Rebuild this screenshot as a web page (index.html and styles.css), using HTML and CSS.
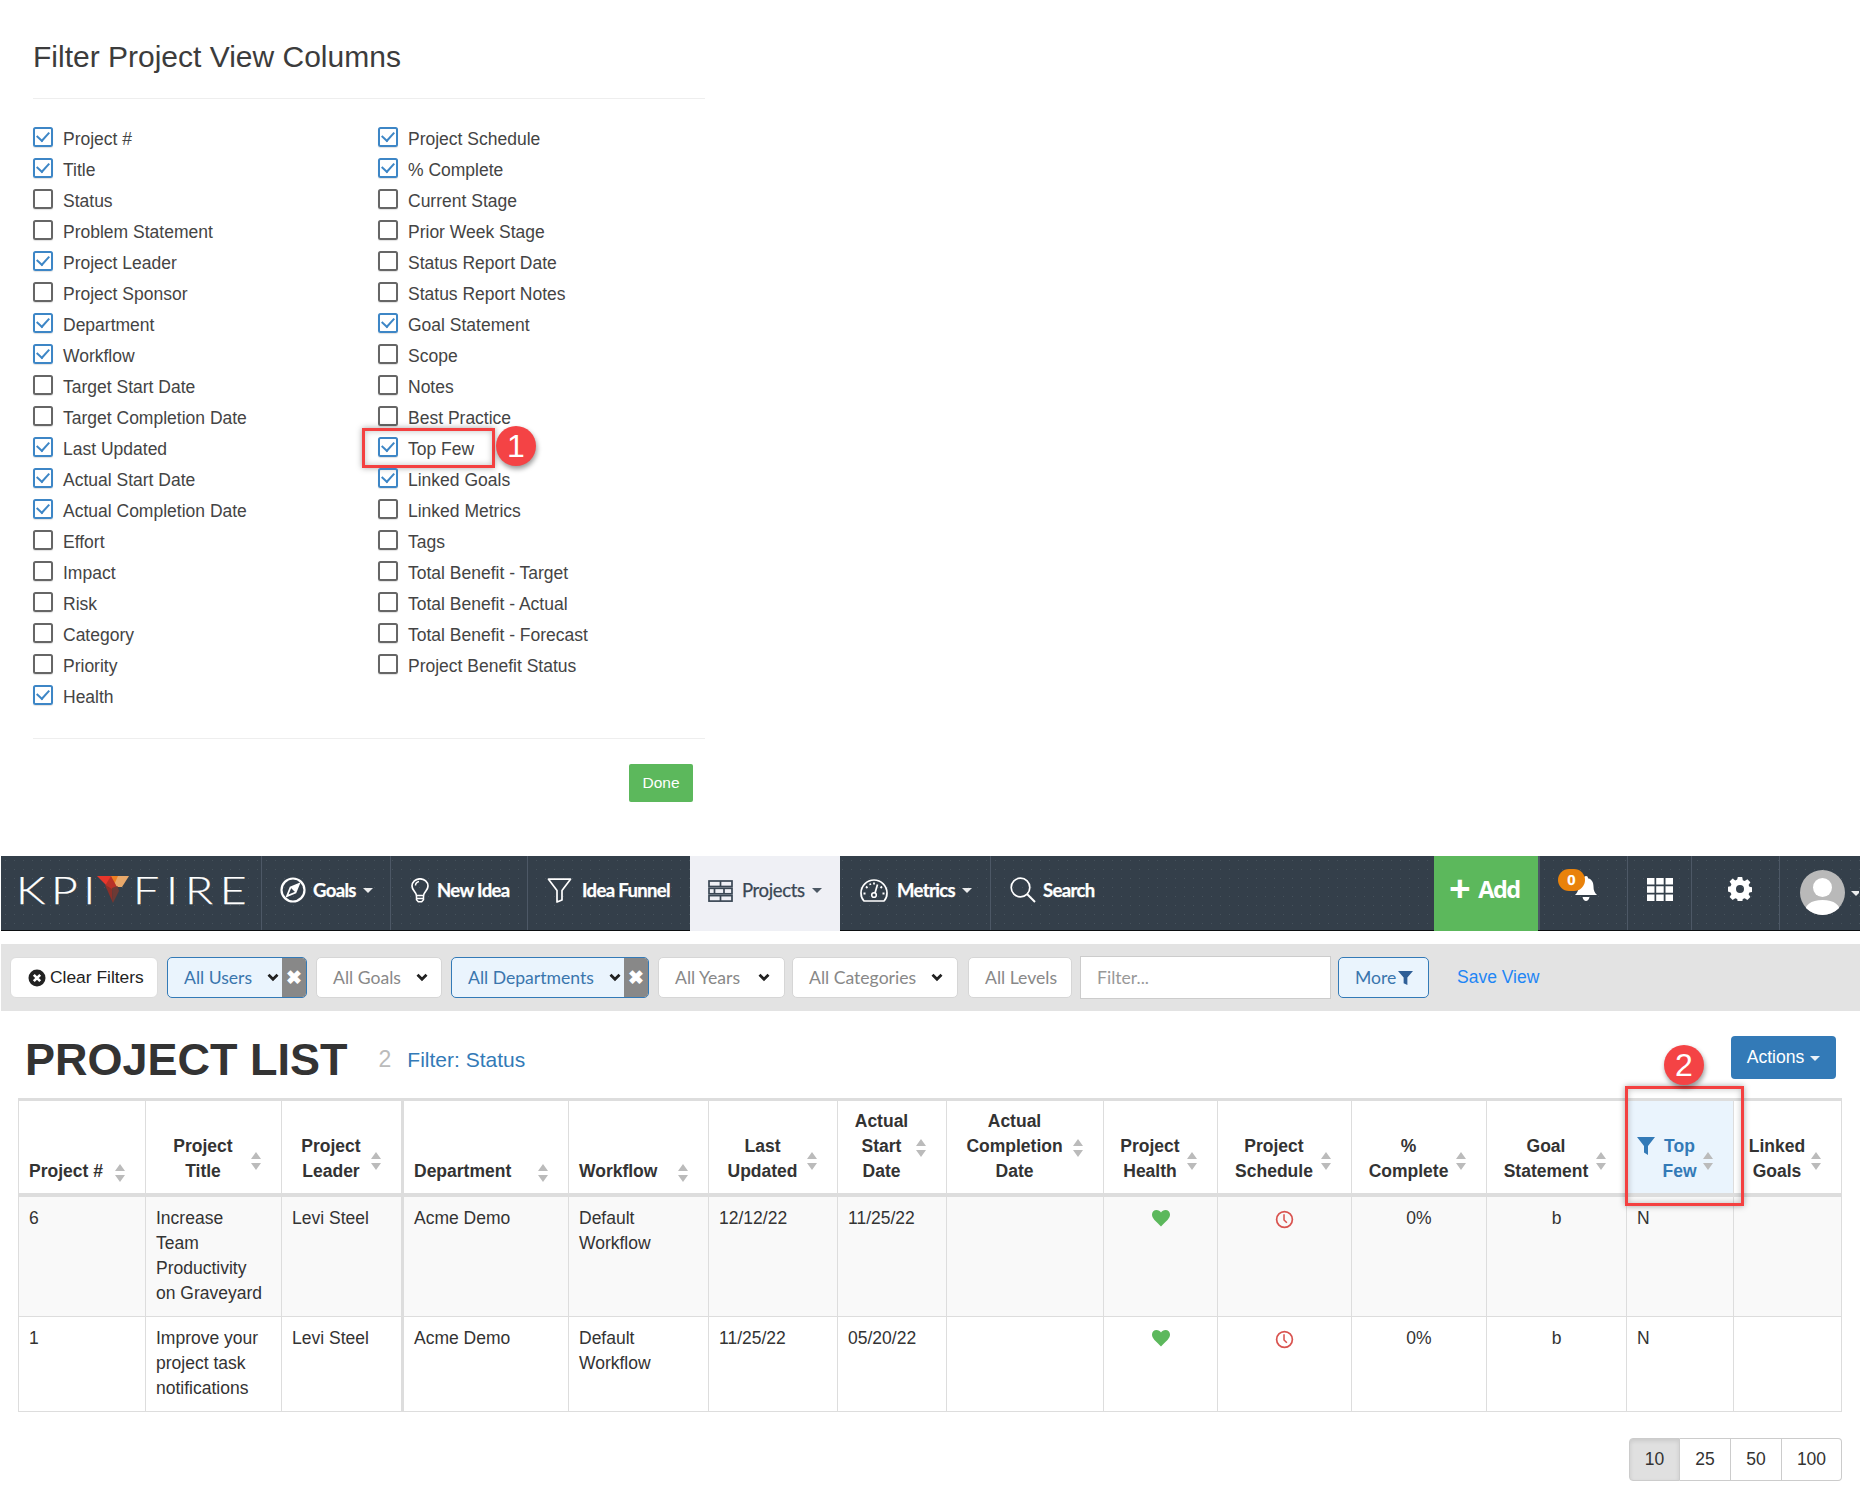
FILE: index.html
```html
<!DOCTYPE html>
<html lang="en">
<head>
<meta charset="utf-8">
<title>Project List</title>
<link rel="stylesheet" href="styles.css">
</head>
<body>
<svg class="defs" width="0" height="0" aria-hidden="true">
  <symbol id="chev" viewBox="0 0 12 9"><path d="M1.5 1.8 6 6.3l4.5-4.5" fill="none" stroke="currentColor" stroke-width="2.8"/></symbol>
  <symbol id="sort" viewBox="0 0 12 20"><path d="M6 1 11 8H1zM6 19 1 12h10z" fill="#bbb"/></symbol>
  <symbol id="heart" viewBox="0 0 22 20"><path d="M11 19.5C5 13.5 1 10.5 1 6.2 1 3 3.2 1 6 1c2.200 0 4 1.200 5 3 1-1.800 2.800-3 5-3 2.800 0 5 2 5 5.200 0 4.300-4 7.300-10 13.300z" fill="#5cb85c"/></symbol>
  <symbol id="clock" viewBox="0 0 20 20"><circle cx="10" cy="10" r="8.300" fill="none" stroke="#d9534f" stroke-width="1.800"/><path d="M9.500 4.500v6l3 3" fill="none" stroke="#d9534f" stroke-width="1.600"/></symbol>
</svg>

<section class="modal">
  <h2 class="modal-title">Filter Project View Columns</h2>
  <div class="columns">
    <ul class="col">
      <li><span class="box on"></span>Project #</li>
      <li><span class="box on"></span>Title</li>
      <li><span class="box"></span>Status</li>
      <li><span class="box"></span>Problem Statement</li>
      <li><span class="box on"></span>Project Leader</li>
      <li><span class="box"></span>Project Sponsor</li>
      <li><span class="box on"></span>Department</li>
      <li><span class="box on"></span>Workflow</li>
      <li><span class="box"></span>Target Start Date</li>
      <li><span class="box"></span>Target Completion Date</li>
      <li><span class="box on"></span>Last Updated</li>
      <li><span class="box on"></span>Actual Start Date</li>
      <li><span class="box on"></span>Actual Completion Date</li>
      <li><span class="box"></span>Effort</li>
      <li><span class="box"></span>Impact</li>
      <li><span class="box"></span>Risk</li>
      <li><span class="box"></span>Category</li>
      <li><span class="box"></span>Priority</li>
      <li><span class="box on"></span>Health</li>
    </ul>
    <ul class="col">
      <li><span class="box on"></span>Project Schedule</li>
      <li><span class="box on"></span>% Complete</li>
      <li><span class="box"></span>Current Stage</li>
      <li><span class="box"></span>Prior Week Stage</li>
      <li><span class="box"></span>Status Report Date</li>
      <li><span class="box"></span>Status Report Notes</li>
      <li><span class="box on"></span>Goal Statement</li>
      <li><span class="box"></span>Scope</li>
      <li><span class="box"></span>Notes</li>
      <li><span class="box"></span>Best Practice</li>
      <li class="marked"><span class="box on"></span>Top Few<span class="callout-box callout-box-one"></span><span class="callout callout-one">1</span></li>
      <li><span class="box on"></span>Linked Goals</li>
      <li><span class="box"></span>Linked Metrics</li>
      <li><span class="box"></span>Tags</li>
      <li><span class="box"></span>Total Benefit - Target</li>
      <li><span class="box"></span>Total Benefit - Actual</li>
      <li><span class="box"></span>Total Benefit - Forecast</li>
      <li><span class="box"></span>Project Benefit Status</li>
    </ul>
  </div>
  <div class="modal-foot"><button class="done">Done</button></div>
</section>

<nav class="nav">
  <div class="nav-item brand">
    <span class="logo-text logo-kpi">KPI</span>
    <svg class="logo-mark" viewBox="0 0 32 27" aria-hidden="true">
      <path d="M0 0H17L11 11z" fill="#e9362b"/>
      <path d="M14 0H23L18 10H10z" fill="#ee7f22"/>
      <path d="M21 0H32L25 11H16z" fill="#e8a86a"/>
      <path d="M8.500 9 14 0 20 11 15 14z" fill="#b83128"/>
      <path d="M8 9 15 13 16 27z" fill="#8e3029"/>
      <path d="M15 12 20.500 10 22 15 16 27z" fill="#6d3a35"/>
    </svg>
    <span class="logo-text logo-fire">FIRE</span>
  </div>
  <div class="nav-item item-goals">
    <svg class="ico ico-goals" viewBox="0 0 26 26" aria-hidden="true"><circle cx="13" cy="13" r="11.500" fill="none" stroke="#fff" stroke-width="2.200"/><path d="M19 7 15.500 15.500 7 19l3.500-8.500z" fill="none" stroke="#fff" stroke-width="1.800"/><path d="M19 7 10.500 10.500 15.500 15.500z" fill="#fff"/></svg>
    <span>Goals</span><i class="caret"></i>
  </div>
  <div class="nav-item item-idea">
    <svg class="ico ico-bulb" viewBox="0 0 18 25" aria-hidden="true"><path d="M5.500 17.500C5 13.500 1 12.500 1 8a8 7.200 0 0 1 16 0c0 4.500-4 5.500-4.500 9.500z" fill="none" stroke="#fff" stroke-width="1.700"/><path d="M5.500 17.500v4.300l1.800 2h3.400l1.800-2v-4.300M5.500 20.500h7M4.500 7.500C4.500 5.500 6 4 8 3.500" fill="none" stroke="#fff" stroke-width="1.500"/></svg>
    <span>New Idea</span>
  </div>
  <div class="nav-item item-funnel">
    <svg class="ico ico-funnel" viewBox="0 0 25 25" aria-hidden="true"><path d="M1.500 1.200h22L15 12.500V22l-5 2V12.500z" fill="none" stroke="#fff" stroke-width="1.700" stroke-linejoin="round"/></svg>
    <span>Idea Funnel</span>
  </div>
  <div class="nav-item item-projects">
    <svg class="ico ico-projects" viewBox="0 0 25 22" aria-hidden="true"><g fill="none" stroke="#3a4754" stroke-width="1.700"><rect x="1" y="1" width="23" height="5.500"/><rect x="1" y="8.300" width="23" height="5.500"/><rect x="1" y="15.600" width="23" height="5.500"/><path d="M12.500 1v5.500M6.500 8.300v5.500M16 8.300v5.500M12.500 15.600v5.500"/></g></svg>
    <span>Projects</span><i class="caret"></i>
  </div>
  <div class="nav-item item-metrics">
    <svg class="ico ico-gauge" viewBox="0 0 28 24" aria-hidden="true"><path d="M4 23C2 21 1 18 1 15a13 13 0 0 1 26 0c0 3-1 6-3 8z" fill="none" stroke="#fff" stroke-width="1.700"/><circle cx="14" cy="17" r="2.300" fill="none" stroke="#fff" stroke-width="1.600"/><path d="M15 15 17.500 6.500" stroke="#fff" stroke-width="1.700"/><path d="M14 4.500v2M6 8.500l1.500 1.500M3.500 15.500h2M10 5.500l.5 1.500M22 8.500 20.500 10M24.500 15.500h-2" stroke="#fff" stroke-width="1.800"/></svg>
    <span>Metrics</span><i class="caret"></i>
  </div>
  <div class="nav-item item-search">
    <svg class="ico ico-search" viewBox="0 0 26 26" aria-hidden="true"><circle cx="10.500" cy="10.500" r="9.300" fill="none" stroke="#fff" stroke-width="1.700"/><path d="M17 17 25 25" stroke="#fff" stroke-width="2"/></svg>
    <span>Search</span>
  </div>
  <div class="nav-add"><span class="plus">+</span><span>Add</span></div>
  <div class="nav-item item-bell">
    <svg class="ico ico-bell" viewBox="0 0 22 25" aria-hidden="true"><path d="M11 0c1.200 0 2 .8 2 2.200 3.800 1 5.500 4 5.500 8.300 0 4 1 6 3.500 8.500H0c2.500-2.500 3.500-4.500 3.500-8.500 0-4.300 1.700-7.300 5.500-8.300C9 .8 9.800 0 11 0zM7.500 21h7c-.5 2.500-2 4-3.500 4s-3-1.500-3.500-4z" fill="#fff"/></svg>
    <span class="badge">0</span>
  </div>
  <div class="nav-item item-apps">
    <svg class="ico ico-apps" viewBox="0 0 26 23" aria-hidden="true"><path d="M0 0h7.500v6.500H0zM9.200 0h7.500v6.500H9.200zM18.500 0H26v6.500h-7.500zM0 8.200h7.500v6.500H0zM9.200 8.200h7.500v6.500H9.200zM18.500 8.200H26v6.500h-7.500zM0 16.500h7.500V23H0zM9.200 16.500h7.500V23H9.200zM18.500 16.500H26V23h-7.500z" fill="#fff"/></svg>
  </div>
  <div class="nav-item item-gear">
    <svg class="ico ico-gear" viewBox="0 0 24 24" aria-hidden="true"><path fill-rule="evenodd" fill="#fff" d="M9.800 0h4.400l.6 3.200 1.900.8 2.700-1.800 3 3-1.800 2.700.8 1.900 3.100.6v4.400l-3.100.6-.8 1.900 1.800 2.700-3 3-2.700-1.800-1.900.8-.6 3.100H9.800l-.6-3.100-1.900-.8-2.700 1.800-3-3 1.800-2.700-.8-1.900L-.5 14.200V9.800l3.100-.6.8-1.900-1.800-2.700 3-3 2.700 1.800 1.900-.8zM12 8a4 4 0 1 0 0 8 4 4 0 0 0 0-8z"/></svg>
  </div>
  <div class="nav-item item-avatar">
    <svg class="ico ico-avatar" viewBox="0 0 45 45" aria-hidden="true"><defs><clipPath id="round"><circle cx="22.500" cy="22.500" r="22.500"/></clipPath></defs><circle cx="22.500" cy="22.500" r="22.500" fill="#b9b9b9"/><g clip-path="url(#round)" fill="#fff"><circle cx="22.500" cy="17.500" r="9.500"/><path d="M4 45c0-10 7-15 18.500-15S41 35 41 45z"/></g></svg>
    <i class="caret caret-avatar"></i>
  </div>
</nav>

<form class="filters">
  <button type="button" class="clear">
    <svg class="clear-ico" viewBox="0 0 18 18" aria-hidden="true"><circle cx="9" cy="9" r="8.500" fill="#222"/><path d="M5.800 5.800l6.400 6.400M12.200 5.800l-6.400 6.400" stroke="#fff" stroke-width="2.600"/></svg>
    Clear Filters
  </button>
  <div class="ctl sel-users active"><span>All Users</span><svg class="chev"><use href="#chev"/></svg><b class="x">✖</b></div>
  <div class="ctl sel-goals"><span>All Goals</span><svg class="chev"><use href="#chev"/></svg></div>
  <div class="ctl sel-depts active"><span>All Departments</span><svg class="chev"><use href="#chev"/></svg><b class="x">✖</b></div>
  <div class="ctl sel-years"><span>All Years</span><svg class="chev"><use href="#chev"/></svg></div>
  <div class="ctl sel-cats"><span>All Categories</span><svg class="chev"><use href="#chev"/></svg></div>
  <div class="ctl sel-levels"><span>All Levels</span></div>
  <div class="filter-input">Filter...</div>
  <div class="ctl more active"><span class="more-text">More</span>
    <svg class="more-ico" viewBox="0 0 16 16" aria-hidden="true"><path d="M0 1h16L10 8v8l-4-2V8z" fill="#2f5f97"/></svg>
  </div>
  <a class="save-view">Save View</a>
</form>

<header class="page-head">
  <h1 class="page-title">PROJECT LIST</h1>
  <span class="count">2</span>
  <a class="filter-note">Filter: Status</a>
  <button class="actions">Actions<i class="caret"></i></button>
</header>

<div class="table-wrap">
  <span class="callout-box callout-box-two"></span>
  <span class="callout callout-two">2</span>
  <table class="grid">
    <colgroup>
      <col class="w127"><col class="w136"><col class="w121"><col class="w166"><col class="w140"><col class="w129"><col class="w109"><col class="w157"><col class="w114"><col class="w134"><col class="w135"><col class="w140"><col class="w107"><col class="w108">
    </colgroup>
    <thead>
      <tr>
        <th class="left"><div class="th"><span class="lbl">Project #</span><svg class="sort"><use href="#sort"/></svg></div></th>
        <th><div class="th"><span class="lbl">Project<br>Title</span><svg class="sort"><use href="#sort"/></svg></div></th>
        <th><div class="th"><span class="lbl">Project<br>Leader</span><svg class="sort"><use href="#sort"/></svg></div></th>
        <th class="left thick"><div class="th"><span class="lbl">Department</span><svg class="sort"><use href="#sort"/></svg></div></th>
        <th class="left"><div class="th"><span class="lbl">Workflow</span><svg class="sort"><use href="#sort"/></svg></div></th>
        <th><div class="th"><span class="lbl">Last<br>Updated</span><svg class="sort"><use href="#sort"/></svg></div></th>
        <th><div class="th"><span class="lbl">Actual<br>Start<br>Date</span><svg class="sort"><use href="#sort"/></svg></div></th>
        <th><div class="th"><span class="lbl">Actual<br>Completion<br>Date</span><svg class="sort"><use href="#sort"/></svg></div></th>
        <th><div class="th"><span class="lbl">Project<br>Health</span><svg class="sort"><use href="#sort"/></svg></div></th>
        <th><div class="th"><span class="lbl">Project<br>Schedule</span><svg class="sort"><use href="#sort"/></svg></div></th>
        <th><div class="th"><span class="lbl">%<br>Complete</span><svg class="sort"><use href="#sort"/></svg></div></th>
        <th><div class="th"><span class="lbl">Goal<br>Statement</span><svg class="sort"><use href="#sort"/></svg></div></th>
        <th class="filtered"><div class="th"><svg class="th-funnel" viewBox="0 0 18 18" aria-hidden="true"><path d="M0 0h18L11 9v9l-4-2.500V9z" fill="#337ab7"/></svg><span class="lbl">Top<br>Few</span><svg class="sort"><use href="#sort"/></svg></div></th>
        <th><div class="th"><span class="lbl">Linked<br>Goals</span><svg class="sort"><use href="#sort"/></svg></div></th>
      </tr>
    </thead>
    <tbody>
      <tr class="odd">
        <td>6</td><td>Increase<br>Team<br>Productivity<br>on Graveyard</td><td>Levi Steel</td><td class="thick">Acme Demo</td><td>Default Workflow</td><td>12/12/22</td><td>11/25/22</td><td></td>
        <td class="c"><svg class="heart"><use href="#heart"/></svg></td><td class="c"><svg class="clock"><use href="#clock"/></svg></td><td class="c">0%</td><td class="c">b</td><td>N</td><td></td>
      </tr>
      <tr class="even">
        <td>1</td><td>Improve your project task notifications</td><td>Levi Steel</td><td class="thick">Acme Demo</td><td>Default Workflow</td><td>11/25/22</td><td>05/20/22</td><td></td>
        <td class="c"><svg class="heart"><use href="#heart"/></svg></td><td class="c"><svg class="clock"><use href="#clock"/></svg></td><td class="c">0%</td><td class="c">b</td><td>N</td><td></td>
      </tr>
    </tbody>
  </table>
</div>

<div class="pager">
  <span class="page current">10</span><span class="page">25</span><span class="page">50</span><span class="page">100</span>
</div>
</body>
</html>
```
FILE: styles.css
```css
* { box-sizing: border-box; }
html, body { margin: 0; padding: 0; background: #fff; }
body { font-family: "Liberation Sans", Arial, sans-serif; font-size: 17.5px; line-height: 25px; color: #333; width: 1860px; height: 1509px; overflow: hidden; }
.defs { position: absolute; }

/* Column filter dialog */
.modal { height: 856px; width: 705px; padding: 40px 0 0 33px; }
.modal-title { margin: 0; font-weight: 400; font-size: 30px; line-height: 34px; padding-bottom: 24px; border-bottom: 1.500px solid #eee; color: #3c3c3c; box-sizing: content-box; height: 34px; }
.columns { display: flex; margin-top: 25px; }
.col { list-style: none; margin: 0; padding: 0; width: 345px; flex: none; }
.col li { display: flex; align-items: center; height: 31px; color: #444; position: relative; }
.box { width: 20px; height: 20px; margin: -6px 10px 0 0; border: 2.500px solid #666; border-radius: 2.500px; position: relative; flex: none; box-shadow: 0 1px 1px rgba(0,0,0,.12); }
.box.on { border-color: #3d86c6; }
.box.on::after { content: ""; position: absolute; left: 4px; top: .5px; width: 6px; height: 10px; border: solid #3d86c6; border-width: 0 2.500px 2.500px 0; transform: rotate(42deg); }
.modal-foot { margin-top: 24.500px; padding: 25px 12px 0 0; border-top: 1.500px solid #eee; display: flex; justify-content: flex-end; }
.done { width: 64px; height: 38px; border: 0; border-radius: 2px; background: #5cb85c; color: #fff; font: 15.500px "Liberation Sans", Arial, sans-serif; padding: 0; }

/* Callouts */
.callout-box { position: absolute; border: 3.500px solid #f44040; box-shadow: 0 0 6px rgba(0,0,0,.35), inset 0 0 6px rgba(0,0,0,.25); }
.callout-box-one { left: -16px; top: -6.500px; width: 133px; height: 40px; }
.callout { position: absolute; width: 40px; height: 40px; border-radius: 50%; background: #f44345; color: #fff; font-size: 32px; line-height: 40px; text-align: center; box-shadow: 1px 3px 5px rgba(0,0,0,.4); }
.callout-one { left: 118px; top: -8.500px; }
.table-wrap { position: relative; margin-left: 18px; }
.callout-box-two { left: 1607px; top: -12px; width: 119px; height: 120px; z-index: 2; }
.callout-two { left: 1646px; top: -53px; z-index: 3; }

/* Navbar */
.nav { display: flex; height: 75px; margin-left: 1px; background-color: #343f4a; background-image: radial-gradient(circle, #46525c 0.6px, transparent 0.9px); background-size: 9px 9px; border-bottom: 1px solid #0c0f12; font-family: Lato, sans-serif; font-size: 18.500px; font-weight: 700; color: #fff; letter-spacing: -0.65px; }
.nav-item { display: flex; align-items: center; height: 100%; padding-bottom: 6px; border-right: 1px solid #4d5866; flex: none; position: relative; }
.nav-item span { -webkit-text-stroke: .25px currentColor; }
.ico { flex: none; display: block; }
.brand { width: 261px; padding-left: 15px; padding-bottom: 7px; font-weight: 300; }
.logo-text { display: block; flex: none; font-family: Lato, sans-serif; font-weight: 300; font-size: 37px; letter-spacing: 4.500px; color: #fff; line-height: 1; transform: scaleX(1.25); transform-origin: left center; -webkit-text-stroke: 0; }
.logo-kpi { width: 81px; }
.logo-fire { width: 110px; letter-spacing: 5.500px; }
.logo-mark { width: 32px; height: 27px; margin: 0 4px 0 0; flex: none; }
.item-goals { width: 129px; padding-left: 18px; }
.ico-goals { width: 26px; height: 26px; margin-right: 7px; }
.item-idea { width: 137px; padding-left: 20px; }
.ico-bulb { width: 18px; height: 25px; margin-right: 8px; }
.item-funnel { width: 162px; padding-left: 19px; border-right: 0; }
.ico-funnel { width: 25px; height: 25px; margin-right: 10px; }
.item-projects { width: 150px; padding-left: 18px; background: #eff0f5; color: #3a4754; font-weight: 400; border-right: 0; height: calc(100% + 1px); letter-spacing: -0.35px; }
.ico-projects { width: 25px; height: 22px; margin-right: 9px; }
.item-metrics { width: 151px; padding-left: 20px; }
.ico-gauge { width: 28px; height: 24px; margin-right: 9px; }
.item-search { width: 443px; padding-left: 19px; border-right: 0; }
.ico-search { width: 26px; height: 26px; margin-right: 7px; }
.nav-add { display: flex; align-items: center; width: 104px; height: calc(100% + 1px); padding: 0 0 9px 15px; background: #5cb85c; font-family: "Open Sans", sans-serif; font-size: 23.500px; font-weight: 700; letter-spacing: -1.500px; flex: none; }
.plus { font-size: 38px; line-height: 1; margin: -5px 9px 0 0; font-weight: 700; }
.caret { display: inline-block; width: 0; height: 0; margin-left: 7px; border-top: 5px solid currentColor; border-left: 5px solid transparent; border-right: 5px solid transparent; opacity: .9; }
.item-bell { width: 90px; padding: 0 0 9px 35px; border-left: 2px solid #4d5866; }
.ico-bell { width: 22px; height: 25px; }
.badge { position: absolute; left: 18px; top: 13px; width: 27px; height: 22px; border-radius: 11px; background: #e9820a; color: #fff; font: 700 15px/22px "Liberation Sans", Arial, sans-serif; text-align: center; letter-spacing: 0; -webkit-text-stroke: 0; }
.item-apps { width: 64px; padding: 0 0 8px 19px; }
.ico-apps { width: 26px; height: 23px; }
.item-gear { width: 88px; padding: 0 0 9px 36px; }
.ico-gear { width: 24px; height: 24px; }
.item-avatar { width: 79px; padding: 0 0 0 20px; border-right: 0; overflow: hidden; }
.ico-avatar { width: 45px; height: 45px; margin-top: -1px; }
.caret-avatar { margin-left: 6px; flex: none; }

/* Filter bar */
.filters { display: flex; align-items: center; height: 67px; margin: 13px 0 0 1px; padding-left: 9px; background: #e3e3e3; font-family: Lato, sans-serif; font-size: 17.600px; }
.clear { display: flex; align-items: center; width: 148px; height: 41px; padding: 0 0 0 17px; margin-right: 9px; border: 1px solid #ddd; border-radius: 6px; background: #fff; color: #222; font: 17.400px "Liberation Sans", Arial, sans-serif; }
.clear-ico { width: 18px; height: 18px; margin-right: 4px; flex: none; }
.ctl { display: flex; align-items: center; height: 41px; padding-left: 16px; border: 1px solid #d6d6d6; border-radius: 5px; background: #fff; color: #888; position: relative; overflow: hidden; flex: none; }
.ctl.active { background: #eaf4fd; border-color: #337ab7; color: #3a76ad; }
.chev { width: 12px; height: 9px; color: #222; flex: none; margin-left: auto; }
.x { width: 24px; height: 100%; margin-left: 3px; background: #888; color: #fff; font-size: 19px; line-height: 37px; text-align: center; flex: none; }
.sel-users { width: 140px; margin-right: 9px; }
.sel-goals { width: 126px; margin-right: 9px; padding-right: 13px; }
.sel-depts { width: 198px; margin-right: 9px; }
.sel-years { width: 127px; margin-right: 7px; padding-right: 14px; }
.sel-cats { width: 166px; margin-right: 10px; padding-right: 14px; }
.sel-levels { width: 104px; margin-right: 8px; }
.filter-input { width: 251px; height: 43px; margin-right: 7px; padding: 0 16px; border: 1px solid #ccc; background: #fff; color: #999; line-height: 41px; font-size: 17.600px; }
.more { width: 91px; }
.more-text { margin-right: 2px; }
.more-ico { width: 15px; height: 15px; }
.save-view { margin-left: 28px; color: #1f86f5; font: 17.500px "Liberation Sans", Arial, sans-serif; }

/* Page heading */
.page-head { display: flex; align-items: center; height: 87px; padding: 6px 24px 0 25px; }
.page-title { margin: 4px 0 0; font-size: 45px; line-height: 50px; font-weight: 700; color: #333; }
.count { margin: 4px 0 0 31px; color: #bbb; font-size: 23px; }
.filter-note { margin: 4px 0 0 16px; color: #337ab7; font-size: 21px; }
.actions { margin-left: auto; width: 105px; height: 43px; padding: 0; border: 0; border-radius: 4px; background: #337ab7; color: #fff; font: 17.600px "Liberation Sans", Arial, sans-serif; }
.actions .caret { margin-left: 6px; vertical-align: middle; }

/* Table */
.grid { width: 1823px; table-layout: fixed; border-collapse: collapse; border: 1px solid #ddd; border-top: 3px solid #ddd; }
.w127 { width: 127px; } .w136 { width: 136px; } .w121 { width: 121px; } .w166 { width: 166px; }
.w140 { width: 140px; } .w129 { width: 129px; } .w109 { width: 109px; } .w157 { width: 157px; }
.w114 { width: 114px; } .w134 { width: 134px; } .w135 { width: 135px; } .w107 { width: 107px; } .w108 { width: 108px; }
.grid th, .grid td { border: 1px solid #ddd; padding: 9px 10px 8px; vertical-align: top; text-align: left; font-weight: 400; }
.grid thead th { border-top: 3px solid #ddd; border-bottom: 4px solid #ddd; vertical-align: bottom; padding: 8px 19px 9px 10px; font-weight: 700; text-align: center; color: #333; }
.grid th.left { text-align: left; }
.grid .thick { border-left: 3px solid #ddd; }
.grid th.filtered { background: #eaf4fd; color: #337ab7; }
.grid .odd { height: 121px; }
.grid .even { height: 95px; }
.grid .odd td { background: #f9f9f9; }
.grid td.c { text-align: center; }
.th { display: flex; align-items: center; }
.lbl { flex: 1; min-width: 0; }
.sort { width: 12px; height: 20px; flex: none; margin-top: 3px; }
.th-funnel { width: 18px; height: 18px; flex: none; align-self: flex-start; margin: 3px 2px 0 0; }
.heart { width: 20px; height: 18px; display: inline-block; vertical-align: top; margin-top: 3px; }
.clock { width: 19px; height: 19px; display: inline-block; vertical-align: top; margin-top: 4px; }

/* Pager */
.pager { display: flex; justify-content: flex-end; margin: 26px 18px 0 0; }
.page { width: 51px; height: 43px; border: 1px solid #ccc; border-left-width: 0; text-align: center; line-height: 41px; color: #333; background: #fff; }
.page:first-child { border-left-width: 1px; border-radius: 4px 0 0 4px; }
.page:last-child { width: 60px; border-radius: 0 4px 4px 0; }
.page.current { background: #e0e0e0; box-shadow: inset 0 2px 4px rgba(0,0,0,.1); }
```
